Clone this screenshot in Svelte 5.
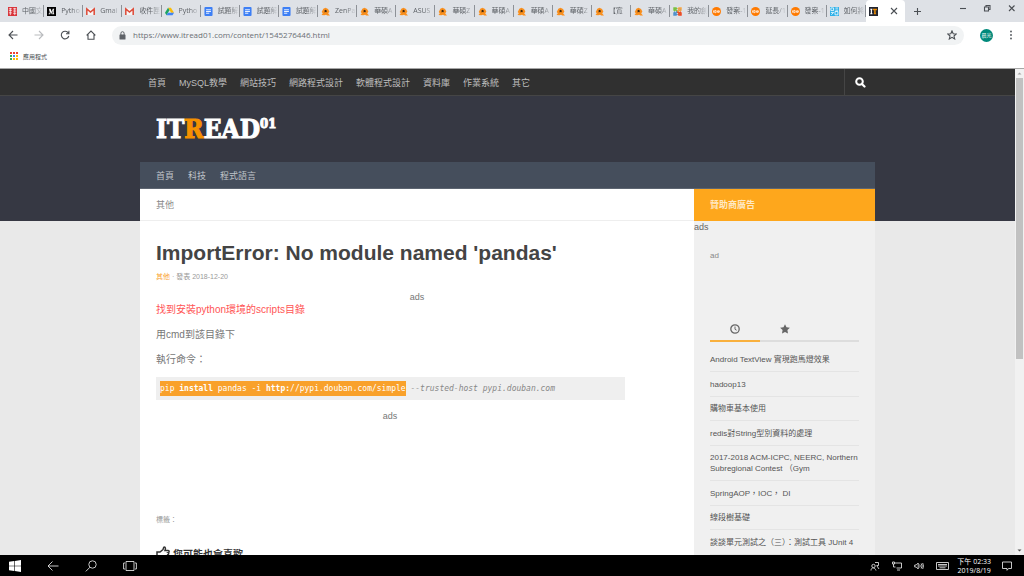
<script>
  const tabs = [
    { icon: 'zh', title: '中國文' },
    { icon: 'medium', title: 'Pytho' },
    { icon: 'gmail', title: 'Gmai' },
    { icon: 'gmail', title: '收件匣' },
    { icon: 'drive', title: 'Pytho' },
    { icon: 'doc', title: '試題解' },
    { icon: 'doc', title: '試題解' },
    { icon: 'doc', title: '試題解' },
    { icon: 'fox', title: 'ZenPa' },
    { icon: 'fox', title: '華碩A' },
    { icon: 'fox', title: 'ASUS' },
    { icon: 'fox', title: '華碩Z' },
    { icon: 'fox', title: '華碩A' },
    { icon: 'fox', title: '華碩A' },
    { icon: 'fox', title: '華碩Z' },
    { icon: 'fox', title: '【寬' },
    { icon: 'fox', title: '華碩A' },
    { icon: 'joomla', title: '我的創' },
    { icon: 'job', title: '發案-1' },
    { icon: 'job', title: '延長/1' },
    { icon: 'job', title: '發案-1' },
    { icon: 'ask', title: '如何將' }
  ];

  const topLinks = ['首頁', 'MySQL教學', '網站技巧', '網路程式設計', '軟體程式設計', '資料庫', '作業系統', '其它'];
  const subLinks = ['首頁', '科技', '程式語言'];

  const posts = [
    'Android TextView 實現跑馬燈效果',
    'hadoop13',
    '購物車基本使用',
    'redis對String型別資料的處理',
    '2017-2018 ACM-ICPC, NEERC, Northern Subregional Contest （Gym',
    'SpringAOP，IOC， DI',
    '線段樹基礎',
    '談談單元測試之（三）：測試工具 JUnit 4'
  ];

  const appColors = ['#ea4335', '#ea4335', '#ea4335', '#34a853', '#4285f4', '#fbbc05', '#34a853', '#fbbc05', '#fbbc05'];

  let url = $state('https://www.itread01.com/content/1545276446.html');
  let panel = $state('recent');
</script>

{#snippet favicon(name)}
  <svg class="favicon" viewBox="0 0 10 10" aria-hidden="true">
    {#if name === 'zh'}
      <rect width="10" height="10" fill="#d8343a" />
      <path d="M1 2h3.3M1 4h3.3M2.6 1v8M1 6.5h3.3M5.7 2h3.5M7.5 1v8M5.7 4.5h3.5M5.7 7h3.5" stroke="#fff" stroke-width=".8" />
    {:else if name === 'medium'}
      <rect width="10" height="10" fill="#000" />
      <path d="M2 2h2l1.2 3.2L6.4 2H8v.6l-.5.4v4l.5.4V8H5.8v-.6l.4-.4V4L4.8 8h-.4L2.9 4v3l.6.6V8H1.8v-.4l.7-.6V3z" fill="#fff" />
    {:else if name === 'gmail'}
      <path d="M0 1.5h10v7.5H0z" fill="#f5f5f5" />
      <path d="M.9 9V2.2L5 5.6l4.1-3.4V9" fill="none" stroke="#dd4b39" stroke-width="1.7" />
    {:else if name === 'drive'}
      <path d="M3.4.8h3.2L10 6.5H6.8z" fill="#fbbc05" />
      <path d="M3.4.8 5 3.6 1.7 9.2 0 6.5z" fill="#1da462" />
      <path d="M3.2 6.5H10L8.4 9.2H1.7z" fill="#4285f4" />
    {:else if name === 'doc'}
      <rect x=".5" width="9" height="10" rx="1" fill="#3d7ff5" />
      <path d="M2.3 3.1h5.4M2.3 5h5.4M2.3 6.9h3.6" stroke="#fff" />
    {:else if name === 'fox'}
      <path d="M.8 5.500 2.600 2 5 .8l2.800 1.300 1.500 3L8 7.200l2 2.300H7L5.600 8.600l-2 .6L.6 9 2 7z" fill="#f98f1d" />
      <path d="M4 3.700 5.200 3l1.300 1.300-.4 1.500L5 5.500 4 6z" fill="#3b2712" />
    {:else if name === 'joomla'}
      <g fill="none" stroke-width="2">
        <path d="M1.300 5V1.300H5" stroke="#7ac143" />
        <path d="M5 1.300h3.700V5" stroke="#f9a541" />
        <path d="M8.700 5v3.700H5" stroke="#f44321" />
        <path d="M5 8.700H1.300V5" stroke="#5091cd" />
        <path d="M2 2l6 6" stroke="#7ac143" />
        <path d="M8 2 2 8" stroke="#5091cd" />
        <path d="m5 5 3 3" stroke="#f44321" />
        <path d="m5 5 3-3" stroke="#f9a541" />
      </g>
      <path d="M3.600 0h2.800L5 1.500zM3.600 10h2.800L5 8.500zM0 3.600v2.800L1.500 5zM10 3.600v2.800L8.500 5z" fill="#dee1e6" />
    {:else if name === 'job'}
      <circle cx="5" cy="5" r="5" fill="#ff7a00" />
      <path d="M1.7 3.8v2.500M3 3.800h1.500v2.500H3zM7 3.500 5.500 5.600h2M7 3.800v2.800M8.400 4v2" fill="none" stroke="#fff" stroke-width=".8" />
    {:else if name === 'ask'}
      <rect width="10" height="10" fill="#2eb0e8" />
      <path d="M1 1h3v3H1zM6 1.200h3M6 3.500h3M1 6.200h3M1.500 8.700 4 6M5.600 5h3.200v3.700H5.600z" fill="none" stroke="#fff" stroke-width=".9" />
    {:else}
      <rect width="10" height="10" fill="#222530" />
      <path d="M1.400 2h2.400v1h-.5v4h.5v1H1.400V7H2V3h-.6z" fill="#fff" />
      <path d="M4.500 2h4.300v1.600H8L7.400 3v4l.6.4V8H5.300v-.6l.5-.4V3l-.6.6h-.7z" fill="#f59100" />
    {/if}
  </svg>
{/snippet}

<div class="desktop">
  <header class="browser">
    <div class="tab-strip">
      <div class="tabs">
        {#each tabs as tab}
          <button class="tab">
            {@render favicon(tab.icon)}
            <span class="tab-title">{tab.title}</span>
          </button>
        {/each}
        <div class="tab active">
          {@render favicon('it')}
          <button class="icon-button close" aria-label="關閉分頁">
            <svg width="8" height="8" viewBox="0 0 8 8"><path d="m1 1 6 6M7 1 1 7" /></svg>
          </button>
        </div>
      </div>
      <div class="window-controls">
        <button class="icon-button new-tab" aria-label="新分頁">
          <svg width="9" height="9" viewBox="0 0 9 9"><path d="M4.500 1v7M1 4.500h7" /></svg>
        </button>
        <button class="icon-button" aria-label="最小化">
          <svg width="8" height="8" viewBox="0 0 8 8"><path d="M1 4.500h6" /></svg>
        </button>
        <button class="icon-button" aria-label="還原">
          <svg width="8" height="8" viewBox="0 0 8 8"><path d="M1.500 3h4v4h-4zM3 3V1.500h4v4H5.500" /></svg>
        </button>
        <button class="icon-button" aria-label="關閉">
          <svg width="8" height="8" viewBox="0 0 8 8"><path d="m1 1.500 5.500 5.500M6.500 1.500 1 7" /></svg>
        </button>
      </div>
    </div>

    <div class="toolbar">
      <div class="history">
        <button class="icon-button" aria-label="上一頁">
          <svg width="10" height="10" viewBox="0 0 10 10"><path d="M9.500 5H1.200M5 1 1 5l4 4" /></svg>
        </button>
        <button class="icon-button faded" aria-label="下一頁">
          <svg width="10" height="10" viewBox="0 0 10 10"><path d="M.5 5h8.300M5 1l4 4-4 4" /></svg>
        </button>
        <button class="icon-button" aria-label="重新載入">
          <svg width="10" height="10" viewBox="0 0 10 10"><path d="M8.300 3A3.800 3.800 0 1 0 8.800 6M8.900.8v2.900H6" /></svg>
        </button>
        <button class="icon-button" aria-label="首頁">
          <svg width="10" height="10" viewBox="0 0 10 10"><path d="M.6 5.300 5 1l4.400 4.300M2 4.500V9.200h6V4.500" /></svg>
        </button>
      </div>
      <div class="omnibox">
        <svg width="7" height="9" viewBox="0 0 7 9" aria-hidden="true">
          <rect x=".5" y="3.500" width="6" height="5" rx=".6" fill="#5f6368" />
          <path d="M1.900 4V2.300a1.600 1.600 0 0 1 3.200 0V4" fill="none" stroke="#5f6368" />
        </svg>
        <input type="text" aria-label="網址" bind:value={url} />
        <button class="icon-button" aria-label="加入書籤">
          <svg width="10" height="10" viewBox="0 0 10 10"><path d="m5 .9 1.200 2.800 3.100.3L7 6l.7 3L5 7.400 2.300 9 3 6 .7 4l3.100-.3z" /></svg>
        </button>
      </div>
      <button class="avatar" aria-label="使用者">晨光</button>
      <button class="icon-button" aria-label="選單">
        <svg class="dots" width="4" height="10" viewBox="0 0 4 10"><circle cx="2" cy="1.500" r="1" /><circle cx="2" cy="5" r="1" /><circle cx="2" cy="8.500" r="1" /></svg>
      </button>
    </div>

    <div class="bookmarks">
      <a href="#apps">
        <svg width="8" height="8" viewBox="0 0 8 8" aria-hidden="true">
          {#each appColors as color, i}
            <rect x={(i % 3) * 3} y={Math.floor(i / 3) * 3} width="2" height="2" fill={color} />
          {/each}
        </svg>
        應用程式
      </a>
    </div>
  </header>

  <div class="viewport">
    <div class="site">
      <nav class="top-nav">
        <div class="container">
          <div class="links">
            {#each topLinks as link}
              <a href="#top">{link}</a>
            {/each}
          </div>
          <button class="search" aria-label="搜尋">
            <svg width="11" height="11" viewBox="0 0 11 11">
              <circle cx="4.500" cy="4.500" r="3.300" fill="none" stroke="#fff" stroke-width="2" />
              <path d="m7 7 2.500 2.500" stroke="#fff" stroke-width="2.200" stroke-linecap="round" />
            </svg>
          </button>
        </div>
      </nav>

      <div class="container brand">
        <a class="logo" href="#home">IT<b>R</b>EAD<sup>01</sup></a>
      </div>

      <div class="container">
        <nav class="sub-nav">
          {#each subLinks as link}
            <a href="#sub">{link}</a>
          {/each}
        </nav>

        <div class="columns">
          <main>
            <div class="crumb">其他</div>
            <article>
              <h1>ImportError: No module named 'pandas'</h1>
              <p class="meta"><a href="#other">其他</a> · 發表 2018-12-20</p>
              <div class="ads first">ads</div>
              <p class="red">找到安裝python環境的scripts目錄</p>
              <p>用cmd到該目錄下</p>
              <p>執行命令：</p>
              <pre><code><mark>pip <b>install</b> pandas -i <b>http:</b>//pypi.douban.com/simple</mark> <i>--trusted-host pypi.douban.com</i></code></pre>
              <div class="ads second">ads</div>
              <p class="labels">標籤：</p>
              <h2>
                <svg width="14" height="14" viewBox="0 0 14 14" aria-hidden="true">
                  <path d="M1 6h3l3-2.500c.5-.6.2-2.500 1.300-2.500 1.500 0 1.200 2.300.7 3.500h3.200c1.300 0 1.300 2 0 2.200.8.500.6 1.800-.4 2 .4.900-.2 1.600-.9 1.700 0 1-.6 1.600-1.500 1.600-2.400 0-3.400-.5-4.900-1H1z" fill="none" stroke="#333" stroke-width="1.500" />
                </svg>
                您可能也會喜歡
              </h2>
            </article>
          </main>

          <aside>
            <div class="sponsor">贊助商廣告</div>
            <div class="side-ads">ads</div>
            <div class="widget">
              <p class="side-ad">ad</p>
              <div class="panel-tabs">
                <button class:selected={panel === 'recent'} onclick={() => (panel = 'recent')} aria-label="最新文章">
                  <svg width="10" height="10" viewBox="0 0 10 10">
                    <circle cx="5" cy="5" r="4.200" fill="none" stroke="#666" stroke-width="1.300" />
                    <path d="M5 2.500V5.300l1.600.9" fill="none" stroke="#666" />
                  </svg>
                </button>
                <button class:selected={panel === 'popular'} onclick={() => (panel = 'popular')} aria-label="熱門文章">
                  <svg width="10" height="10" viewBox="0 0 10 10">
                    <path d="m5 .3 1.500 3 3.400.5-2.500 2.300.6 3.500L5 8 2 9.600l.6-3.500L.1 3.800l3.400-.5z" fill="#666" />
                  </svg>
                </button>
              </div>
              <ul>
                {#each posts as post}
                  <li><a href="#post">{post}</a></li>
                {/each}
              </ul>
            </div>
          </aside>
        </div>
      </div>
    </div>
    <div class="scrollbar" aria-hidden="true">
      <svg width="9" height="9" viewBox="0 0 9 9"><path d="M2.500 5.500h4l-2-2z" fill="#a3a3a3" /></svg>
      <div class="track"><div class="thumb"></div></div>
      <svg width="9" height="9" viewBox="0 0 9 9"><path d="M2.500 3.500h4l-2 2z" fill="#505050" /></svg>
    </div>
  </div>

  <footer class="taskbar">
    <div class="task-left">
      <button aria-label="開始">
        <svg class="start" width="12" height="12" viewBox="0 0 12 12"><path d="M0 1.700 5.200 1v4.700H0zM5.800.9 12 0v5.700H5.800zM0 6.300h5.200V11L0 10.300zM5.800 6.300H12V12l-6.200-.9z" /></svg>
      </button>
      <button aria-label="返回">
        <svg width="12" height="12" viewBox="0 0 12 12"><path d="M11.500 6H1M5.500 1.500 1 6l4.500 4.500" /></svg>
      </button>
      <button aria-label="搜尋">
        <svg width="12" height="12" viewBox="0 0 12 12"><circle cx="7.500" cy="4.500" r="3.700" /><path d="M5 7.200.8 11.400" /></svg>
      </button>
      <button aria-label="工作檢視">
        <svg width="14" height="12" viewBox="0 0 14 12"><path d="M3 1.500h8v9H3zM2 3H.6v6H2M12 3h1.400v6H12" /></svg>
      </button>
    </div>
    <div class="tray">
      <svg width="10" height="10" viewBox="0 0 10 10"><circle cx="3.500" cy="5" r="1.700" /><path d="M1 9.500c0-3.500 4-3.500 5 0M5 1.500h3.500v3H6.500M7 5l2 3" /></svg>
      <svg width="10" height="10" viewBox="0 0 10 10"><path d="M2.500 2h7v5h-5M5 9h3M.5 1h2v2h-2zM1.500 3v3h2" /></svg>
      <svg width="10" height="10" viewBox="0 0 10 10"><path d="M.7 4h1.500l2-2v6l-2-2H.7zM5.700 3.500q1 1.500 0 3M7.200 2.500q1.800 2.500 0 5M8.700 2q1.500 3 0 6" /></svg>
      <svg width="13" height="10" viewBox="0 0 13 10"><path d="M.5 1.500h12v7H.5zM2 3.500h9M2 5h9M3.500 6.800h6" /></svg>
      <div class="clock"><span>下午 02:33</span><span>2019/8/19</span></div>
      <svg width="10" height="10" viewBox="0 0 10 10"><path d="M.5 1h9v6.500H6.500L5 9.300V7.500H.5z" /></svg>
    </div>
  </footer>
</div>

<style>
  :global(body) {
    margin: 0;
  }

  .desktop {
    display: flex;
    flex-direction: column;
    height: 100vh;
    overflow: hidden;
    font-family: 'Liberation Sans', 'Noto Sans CJK TC', sans-serif;
    font-size: 8px;
  }

  .desktop :global(*) {
    box-sizing: border-box;
  }

  svg {
    display: block;
    flex: none;
  }

  button {
    padding: 0;
    border: 0;
    background: none;
    font: inherit;
    color: inherit;
  }

  a {
    color: inherit;
    text-decoration: none;
  }

  /* browser */
  .browser {
    flex: none;
    border-bottom: 1px solid #a6a6a6;
    background: #fff;
    font-family: 'Open Sans', 'Noto Sans CJK TC', sans-serif;
  }

  .tab-strip {
    display: flex;
    height: 22px;
    background: #dee1e6;
  }

  .tabs {
    display: flex;
    flex: 1;
    min-width: 0;
    padding-left: 5px;
  }

  .tab {
    display: flex;
    flex: 1 1 0;
    align-items: center;
    gap: 5px;
    min-width: 0;
    padding: 0 1px 0 3px;
    background: linear-gradient(#8d9197, #8d9197) right center / 1px 12px no-repeat;
    color: #5f6368;
    font-size: 7px;
    line-height: 12px;
  }

  .tab-title {
    flex: 1;
    min-width: 0;
    text-align: left;
    white-space: nowrap;
    mask-image: linear-gradient(to right, #000 50%, transparent);
  }

  .tab.active {
    justify-content: space-between;
    border-radius: 4px 4px 0 0;
    background: #fff;
  }

  .close {
    margin-right: 6px;
  }

  .favicon {
    width: 9px;
    height: 9px;
  }

  .icon-button {
    display: flex;
    align-items: center;
    justify-content: center;
  }

  .icon-button svg {
    fill: none;
    stroke: #4b4f54;
    stroke-width: 1.1;
  }

  .icon-button.faded svg {
    stroke: #b9bbbe;
  }

  .icon-button svg.dots {
    fill: #5f6368;
    stroke: none;
  }

  .window-controls {
    display: flex;
    align-items: center;
    justify-content: space-between;
    width: 119px;
    padding: 0 8px 6px;
  }

  .window-controls .new-tab {
    margin: 6px 20px 0 0;
  }

  .toolbar {
    display: flex;
    align-items: center;
    gap: 16px;
    height: 26px;
    padding: 0 11px 0 8px;
  }

  .history {
    display: flex;
    gap: 16px;
  }

  .omnibox {
    display: flex;
    flex: 1;
    align-items: center;
    gap: 7px;
    height: 19px;
    padding: 0 7px;
    border-radius: 10px;
    background: #f1f3f4;
  }

  .omnibox input {
    flex: 1;
    min-width: 0;
    padding: 0;
    border: 0;
    outline: 0;
    background: none;
    color: #6b6f74;
    font: 8px/12px 'Open Sans', sans-serif;
  }

  .avatar {
    width: 13px;
    height: 13px;
    border-radius: 50%;
    background: #00897b;
    color: #fff;
    font-size: 5px;
    line-height: 13px;
    white-space: nowrap;
  }

  .bookmarks {
    display: flex;
    align-items: center;
    height: 20px;
    padding: 0 10px 4px;
    color: #4b4f54;
    font-size: 6px;
  }

  .bookmarks a {
    display: flex;
    align-items: center;
    gap: 5px;
  }

  /* page */
  .viewport {
    display: flex;
    flex: 1;
    min-height: 0;
    overflow: hidden;
  }

  .site {
    flex: 1;
    min-width: 0;
    background: linear-gradient(#363843 152px, #e9e9e9 152px);
  }

  .container {
    max-width: 735px;
    margin: 0 auto;
  }

  .top-nav {
    height: 27px;
    border-bottom: 1px solid #454545;
    background: #303030;
    color: #bdbdbd;
    font-size: 9px;
  }

  .top-nav .container {
    display: flex;
    justify-content: space-between;
    height: 100%;
  }

  .links {
    display: flex;
    align-items: center;
    gap: 13px;
    padding-left: 8px;
  }

  .search {
    display: flex;
    align-items: center;
    width: 31px;
    padding-left: 10px;
    border-left: 1px solid #454545;
  }

  .brand {
    height: 66px;
    padding: 15px 16px;
  }

  .logo {
    color: #fff;
    font: bold 26px/36px 'DejaVu Serif Condensed', 'DejaVu Serif', serif;
    -webkit-text-stroke: 1px;
  }

  .logo b {
    color: #f59100;
  }

  .logo sup {
    font-size: 13px;
    line-height: 0;
  }

  .sub-nav {
    display: flex;
    align-items: center;
    gap: 14px;
    height: 27px;
    padding: 0 16px;
    border-bottom: 1px solid #5d6571;
    background: #454e5c;
    color: #bfc3c8;
    font-size: 9px;
  }

  .columns {
    display: flex;
  }

  main {
    flex: 1;
    min-width: 0;
    background: #fff;
    color: #777;
  }

  .crumb {
    height: 32px;
    padding: 0 16px;
    border-bottom: 1px solid #eee;
    color: #888;
    font-size: 9px;
    line-height: 32px;
  }

  article {
    padding: 19px 16px 0;
    font-size: 10px;
    line-height: 15px;
  }

  article p {
    margin: 0 0 10px;
  }

  h1 {
    margin: 0 0 5px;
    color: #444;
    font-size: 21px;
    line-height: 26px;
  }

  article .meta {
    margin-bottom: 9px;
    color: #999;
    font-size: 7px;
    line-height: 12px;
  }

  .meta a {
    color: #f9a12b;
  }

  .ads {
    font-size: 9px;
    line-height: 10px;
    text-align: center;
  }

  article .red {
    color: #f55;
  }

  pre {
    margin: 0 53px 11px 0;
    padding: 4px;
    background: #efefef;
    color: #888;
    font: 8px/15px 'DejaVu Sans Mono', 'Liberation Mono', monospace;
  }

  code {
    font: inherit;
  }

  mark {
    display: inline-block;
    background: #f9a12b;
    color: #fff;
  }

  .second {
    height: 101px;
    margin-right: 54px;
  }

  article .labels {
    margin-bottom: 19px;
    color: #999;
    font-size: 7px;
  }

  h2 {
    display: flex;
    gap: 3px;
    margin: 0;
    color: #333;
    font-size: 10px;
    line-height: 18px;
  }

  aside {
    width: 181px;
    background: #f0f0f0;
    color: #666;
  }

  .sponsor {
    height: 32px;
    padding: 0 16px;
    background: #fea71c;
    color: #ffe9c4;
    font-size: 9px;
    font-weight: bold;
    line-height: 32px;
  }

  .side-ads {
    font-size: 9px;
    line-height: 12px;
  }

  .widget {
    padding: 17px 16px 0;
  }

  .side-ad {
    height: 67px;
    margin: 0;
    color: #888;
    line-height: 12px;
  }

  .panel-tabs {
    display: flex;
    height: 25px;
    border-bottom: 2px solid #ddd;
  }

  .panel-tabs button {
    display: flex;
    justify-content: center;
    width: 50px;
    height: 25px;
    padding-top: 7px;
  }

  .panel-tabs .selected {
    border-bottom: 2px solid #f9b03d;
  }

  ul {
    margin: 0;
    padding: 6px 0 0;
    list-style: none;
  }

  li {
    padding: 7px 0 6px;
    border-bottom: 1px solid #e4e4e4;
    color: #555;
    line-height: 11px;
  }

  li:nth-child(odd) {
    padding-top: 6px;
  }

  .scrollbar {
    display: flex;
    flex-direction: column;
    width: 9px;
    background: #f1f1f1;
  }

  .track {
    flex: 1;
    padding: 0 1px;
  }

  .thumb {
    height: 60%;
    background: #c1c1c1;
  }

  /* taskbar */
  .taskbar {
    display: flex;
    flex: none;
    align-items: center;
    justify-content: space-between;
    height: 21px;
    background: #000;
    color: #fff;
  }

  .taskbar svg {
    fill: none;
    stroke: #ddd;
    stroke-width: 0.9;
  }

  .taskbar svg.start {
    fill: #fff;
    stroke: none;
  }

  .task-left {
    display: flex;
    gap: 26px;
    padding-left: 9px;
  }

  .tray {
    display: flex;
    align-items: center;
    gap: 12px;
    padding-right: 12px;
  }

  .clock {
    display: flex;
    flex-direction: column;
    margin: 0 -1px 0 -4px;
    font: 7px/9px 'Open Sans', 'Noto Sans CJK TC', sans-serif;
    text-align: center;
  }
</style>
